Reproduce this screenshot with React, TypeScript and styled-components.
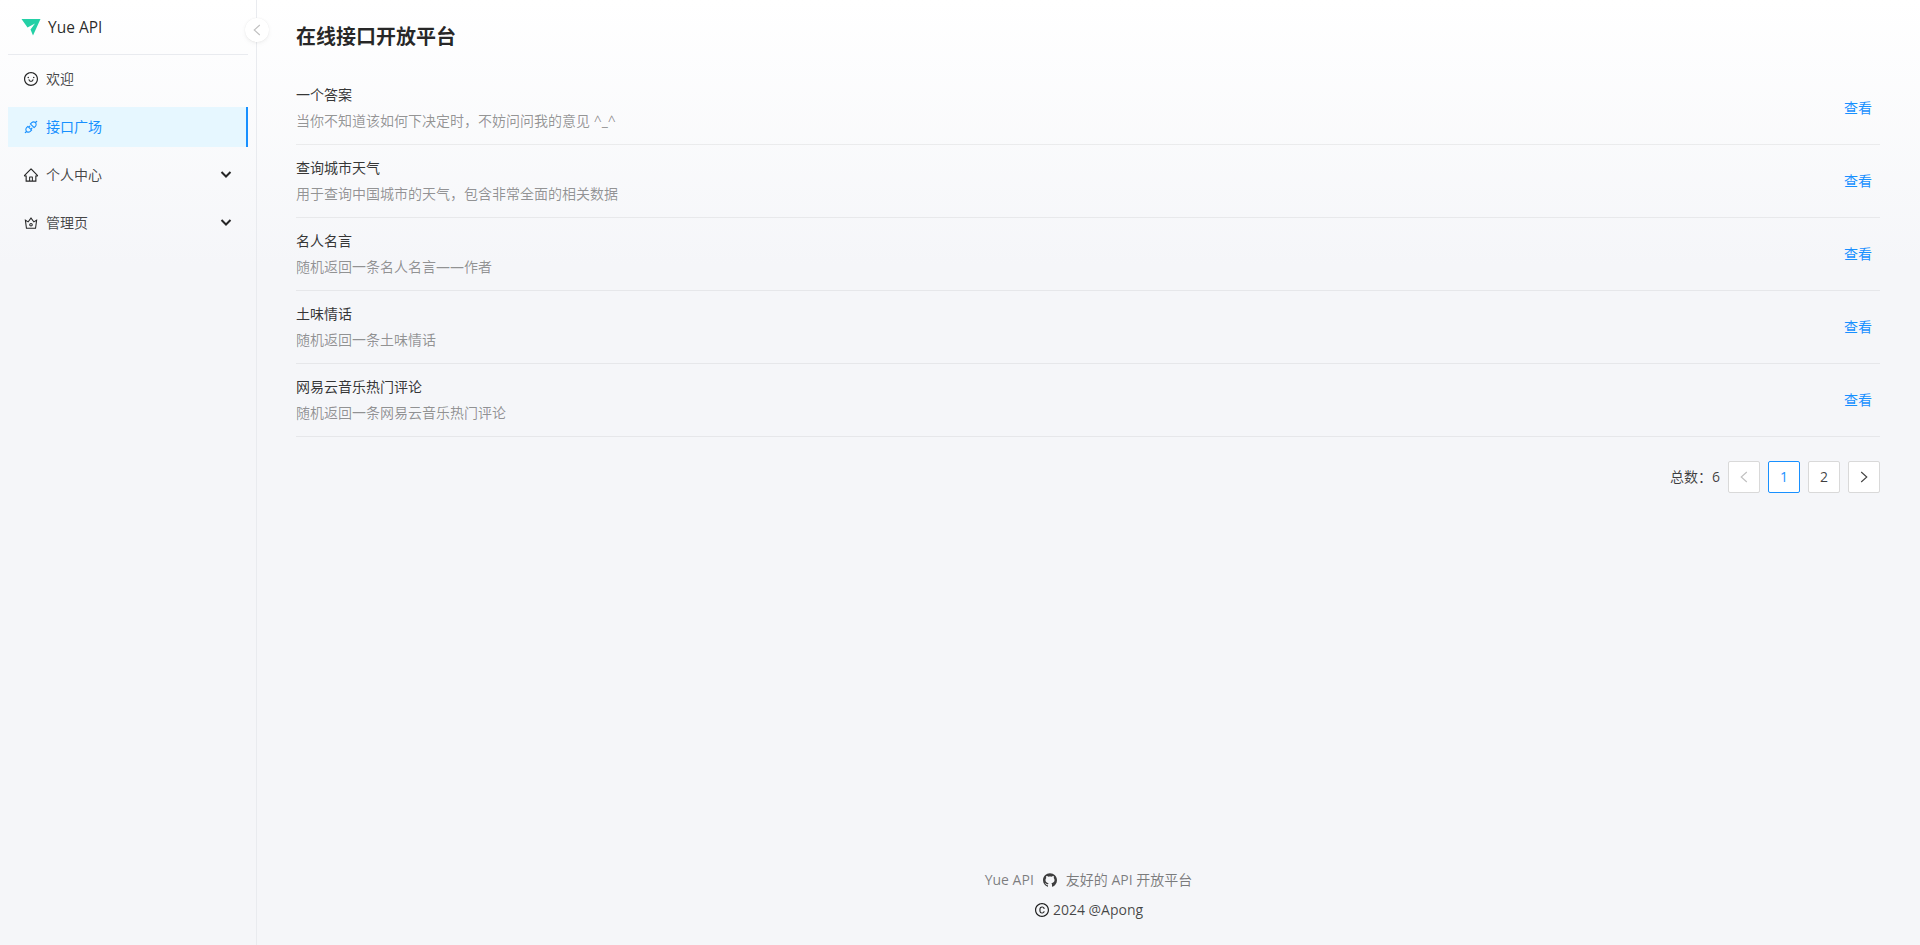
import React from 'react';
import styled, { createGlobalStyle } from 'styled-components';
import {
  AiOutlineApi,
  AiOutlineCopyright,
  AiOutlineCrown,
  AiOutlineHome,
  AiOutlineSmile,
  AiFillGithub,
} from 'react-icons/ai';

const GlobalStyle = createGlobalStyle`
  html, body {
    margin: 0;
    padding: 0;
    height: 100%;
  }
  body {
    font-family: "Open Sans", "Noto Sans CJK SC", sans-serif;
    font-size: 14px;
    line-height: 22px;
    color: rgba(0, 0, 0, 0.85);
    background: #f5f6f9;
  }
`;

const Layout = styled.div`
  display: flex;
  height: 945px;
  overflow: hidden;
  background: linear-gradient(#ffffff, #f5f6f9 28%);
`;

const Sider = styled.aside`
  position: relative;
  flex: 0 0 257px;
  box-sizing: border-box;
  padding: 0 8px;
  border-right: 1px solid #e9ebef;
`;

const Brand = styled.div`
  display: flex;
  align-items: center;
  gap: 7px;
  height: 55px;
  box-sizing: border-box;
  padding: 0 13px;
  border-bottom: 1px solid #e9ebef;
  font-size: 15.5px;
  color: rgba(0, 0, 0, 0.85);
`;

const Collapse = styled.div`
  position: absolute;
  top: 18px;
  left: 245px;
  width: 24px;
  height: 24px;
  display: flex;
  align-items: center;
  justify-content: center;
  border-radius: 50%;
  background: #fff;
  box-shadow: 0 2px 8px -2px rgba(0, 0, 0, 0.05), 0 1px 4px -1px rgba(25, 15, 15, 0.07), 0 0 1px 0 rgba(0, 0, 0, 0.08);
  color: rgba(0, 0, 0, 0.25);
`;

const Menu = styled.nav`
  display: flex;
  flex-direction: column;
  gap: 8px;
  padding-top: 4px;
`;

const MenuItem = styled.div<{ $active?: boolean }>`
  display: flex;
  align-items: center;
  gap: 7px;
  height: 40px;
  box-sizing: border-box;
  padding: 0 16px 0 15px;
  font-size: 14px;
  color: ${(p) => (p.$active ? '#1890ff' : 'rgba(0, 0, 0, 0.72)')};
  background: ${(p) => (p.$active ? '#e6f7ff' : 'transparent')};
  border-right: ${(p) => (p.$active ? '2px solid #1890ff' : '0')};
  svg.menu-icon {
    font-size: 16px;
    color: ${(p) => (p.$active ? '#1890ff' : 'rgba(0, 0, 0, 0.85)')};
  }
`;

const MenuLabel = styled.span`
  flex: 1;
`;

const Main = styled.main`
  flex: 1;
  min-width: 0;
  display: flex;
  flex-direction: column;
`;

const Content = styled.div`
  flex: 1;
  padding: 0 40px 0 39px;
`;

const Title = styled.h1`
  margin: 0;
  padding-top: 21px;
  height: 72px;
  box-sizing: border-box;
  font-size: 20px;
  line-height: 32px;
  font-weight: 600;
  color: rgba(0, 0, 0, 0.85);
`;

const List = styled.ul`
  margin: 0;
  padding: 0;
  list-style: none;
`;

const Row = styled.li`
  display: flex;
  align-items: center;
  justify-content: space-between;
  padding: 12px 0;
  border-bottom: 1px solid rgba(5, 5, 5, 0.06);
`;

const RowTitle = styled.div`
  margin-bottom: 4px;
  color: rgba(0, 0, 0, 0.8);
`;

const RowDesc = styled.div`
  color: rgba(0, 0, 0, 0.42);
`;

const ViewLink = styled.a`
  padding: 0 8px;
  color: #1890ff;
`;

const Pagination = styled.div`
  display: flex;
  align-items: center;
  justify-content: flex-end;
  gap: 8px;
  margin-top: 24px;
`;

const Total = styled.span`
  line-height: 32px;
  color: rgba(0, 0, 0, 0.75);
`;

const PageButton = styled.button<{ $active?: boolean; $disabled?: boolean }>`
  display: flex;
  align-items: center;
  justify-content: center;
  width: 32px;
  height: 32px;
  padding: 0;
  box-sizing: border-box;
  border: 1px solid ${(p) => (p.$active ? '#1890ff' : '#d9d9d9')};
  border-radius: 2px;
  background: #fff;
  font: inherit;
  color: ${(p) => (p.$active ? '#1890ff' : p.$disabled ? 'rgba(0, 0, 0, 0.25)' : 'rgba(0, 0, 0, 0.75)')};
`;

const Footer = styled.footer`
  display: flex;
  flex-direction: column;
  align-items: center;
  gap: 8px;
  padding-bottom: 24px;
  font-size: 14px;
`;

const FooterLine = styled.div<{ $muted?: boolean }>`
  display: flex;
  align-items: center;
  gap: 8px;
  color: ${(p) => (p.$muted ? 'rgba(0, 0, 0, 0.5)' : 'rgba(0, 0, 0, 0.72)')};
`;

const CopyLine = styled(FooterLine)`
  gap: 3px;
`;

const Chevron = ({ dir }: { dir: 'left' | 'right' | 'down' }) => {
  if (dir === 'down') {
    return (
      <svg width="12" height="12" viewBox="0 0 12 12" fill="none" stroke="rgba(0,0,0,0.85)" strokeWidth="2">
        <polyline points="1.5,3 6,7.5 10.5,3" />
      </svg>
    );
  }
  return (
    <svg width="12" height="12" viewBox="0 0 12 12" fill="none" stroke="currentColor" strokeWidth="1.1">
      <polyline points={dir === 'left' ? '8.8,1 3.2,6 8.8,11' : '3.2,1 8.8,6 3.2,11'} />
    </svg>
  );
};

const Logo = () => (
  <svg width="20" height="18" viewBox="0 0 20 18">
    <path d="M0.5 1 H19.5 L12 17.5 L9.5 11.5 L14 5.5 L6.5 9.5 Z" fill="#24d0a6" />
  </svg>
);

const apis = [
  { name: '一个答案', desc: '当你不知道该如何下决定时，不妨问问我的意见 ^_^' },
  { name: '查询城市天气', desc: '用于查询中国城市的天气，包含非常全面的相关数据' },
  { name: '名人名言', desc: '随机返回一条名人名言——作者' },
  { name: '土味情话', desc: '随机返回一条土味情话' },
  { name: '网易云音乐热门评论', desc: '随机返回一条网易云音乐热门评论' },
];

export default function App() {
  return (
    <>
      <GlobalStyle />
      <Layout>
        <Sider>
          <Brand>
            <Logo />
            Yue API
          </Brand>
          <Collapse>
            <Chevron dir="left" />
          </Collapse>
          <Menu>
            <MenuItem>
              <AiOutlineSmile className="menu-icon" />
              <MenuLabel>欢迎</MenuLabel>
            </MenuItem>
            <MenuItem $active>
              <AiOutlineApi className="menu-icon" />
              <MenuLabel>接口广场</MenuLabel>
            </MenuItem>
            <MenuItem>
              <AiOutlineHome className="menu-icon" />
              <MenuLabel>个人中心</MenuLabel>
              <Chevron dir="down" />
            </MenuItem>
            <MenuItem>
              <AiOutlineCrown className="menu-icon" />
              <MenuLabel>管理页</MenuLabel>
              <Chevron dir="down" />
            </MenuItem>
          </Menu>
        </Sider>
        <Main>
          <Content>
            <Title>在线接口开放平台</Title>
            <List>
              {apis.map((api) => (
                <Row key={api.name}>
                  <div>
                    <RowTitle>{api.name}</RowTitle>
                    <RowDesc>{api.desc}</RowDesc>
                  </div>
                  <ViewLink>查看</ViewLink>
                </Row>
              ))}
            </List>
            <Pagination>
              <Total>总数：6</Total>
              <PageButton $disabled>
                <Chevron dir="left" />
              </PageButton>
              <PageButton $active>1</PageButton>
              <PageButton>2</PageButton>
              <PageButton>
                <Chevron dir="right" />
              </PageButton>
            </Pagination>
          </Content>
          <Footer>
            <FooterLine $muted>
              <span>Yue API</span>
              <AiFillGithub size={16} color="rgba(0,0,0,0.75)" />
              <span>友好的 API 开放平台</span>
            </FooterLine>
            <CopyLine>
              <AiOutlineCopyright size={16} color="rgba(0,0,0,0.88)" />
              <span>2024 @Apong</span>
            </CopyLine>
          </Footer>
        </Main>
      </Layout>
    </>
  );
}
